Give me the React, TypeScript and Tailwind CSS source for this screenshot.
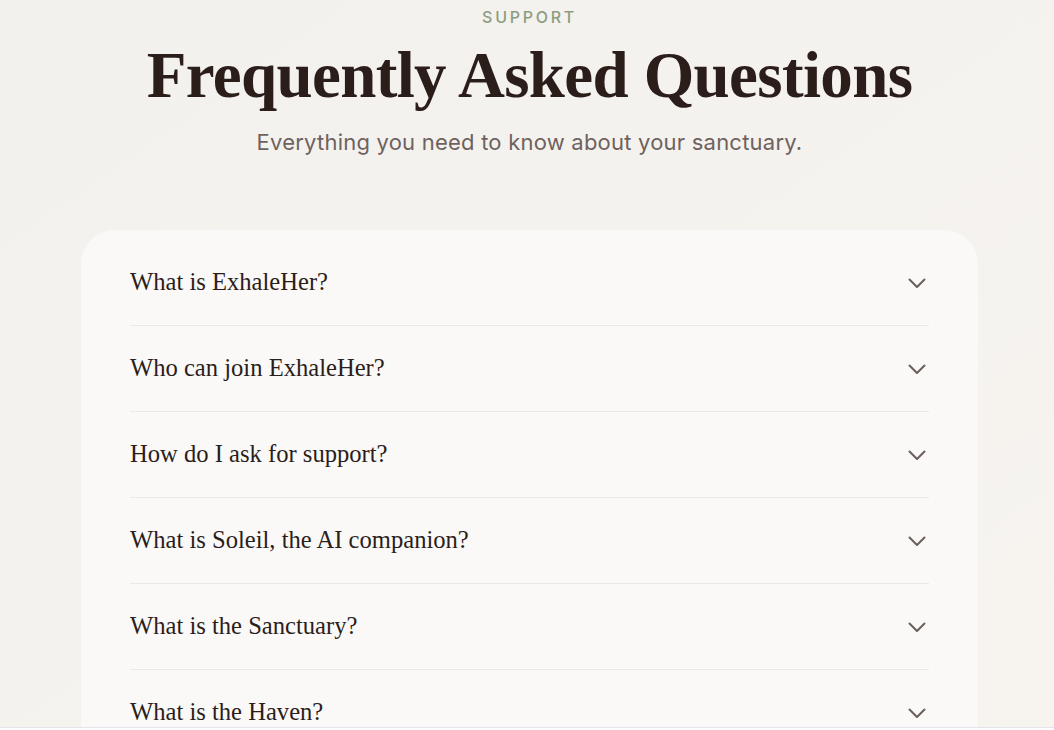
import React from "react";

const questions = [
  "What is ExhaleHer?",
  "Who can join ExhaleHer?",
  "How do I ask for support?",
  "What is Soleil, the AI companion?",
  "What is the Sanctuary?",
  "What is the Haven?",
  "Is my information private?",
];

function Chevron() {
  return (
    <svg width="24" height="24" viewBox="0 0 24 24" fill="none" className="shrink-0">
      <path d="M4.5 8.5L12 16l7.5-7.5" stroke="#6b5f5c" strokeWidth="2" strokeLinecap="round" strokeLinejoin="round" />
    </svg>
  );
}

export default function App() {
  return (
    <div className="relative h-[730px] overflow-hidden bg-gradient-to-br from-[#f3f1ed] to-[#f7f4f0]">
      <div className="flex flex-col items-center pl-[5px]">
        <div
          className="pt-[5px] text-[16px] leading-[24px] font-medium tracking-[0.17em] text-[#8a9e80]"
          style={{ fontFamily: "Inter, sans-serif" }}
        >
          SUPPORT
        </div>
        <h1
          className="mt-[12px] text-[65px] leading-[68px] font-semibold text-[#2b1d1a] tracking-[-0.01em]"
          style={{ fontFamily: '"Liberation Serif", serif' }}
        >
          Frequently Asked Questions
        </h1>
        <p
          className="mt-[18px] text-[22px] leading-[30px] tracking-[0.01em] text-[#6e625e]"
          style={{ fontFamily: "Inter, sans-serif" }}
        >
          Everything you need to know about your sanctuary.
        </p>
        <div className="mt-[73px] w-[897px] rounded-[34px] bg-[#faf9f7] px-[49px] pt-[10px]">
          {questions.map((q) => (
            <div
              key={q}
              className="flex h-[86px] items-center justify-between border-b border-[#ece8e4]"
            >
              <span
                className="text-[24.6px] text-[#2b1d1a]"
                style={{ fontFamily: '"Liberation Serif", serif' }}
              >
                {q}
              </span>
              <Chevron />
            </div>
          ))}
        </div>
      </div>
      <div className="fixed bottom-0 left-0 right-0 h-[3px] border-t border-[#e3e5ea] bg-white" />
    </div>
  );
}
